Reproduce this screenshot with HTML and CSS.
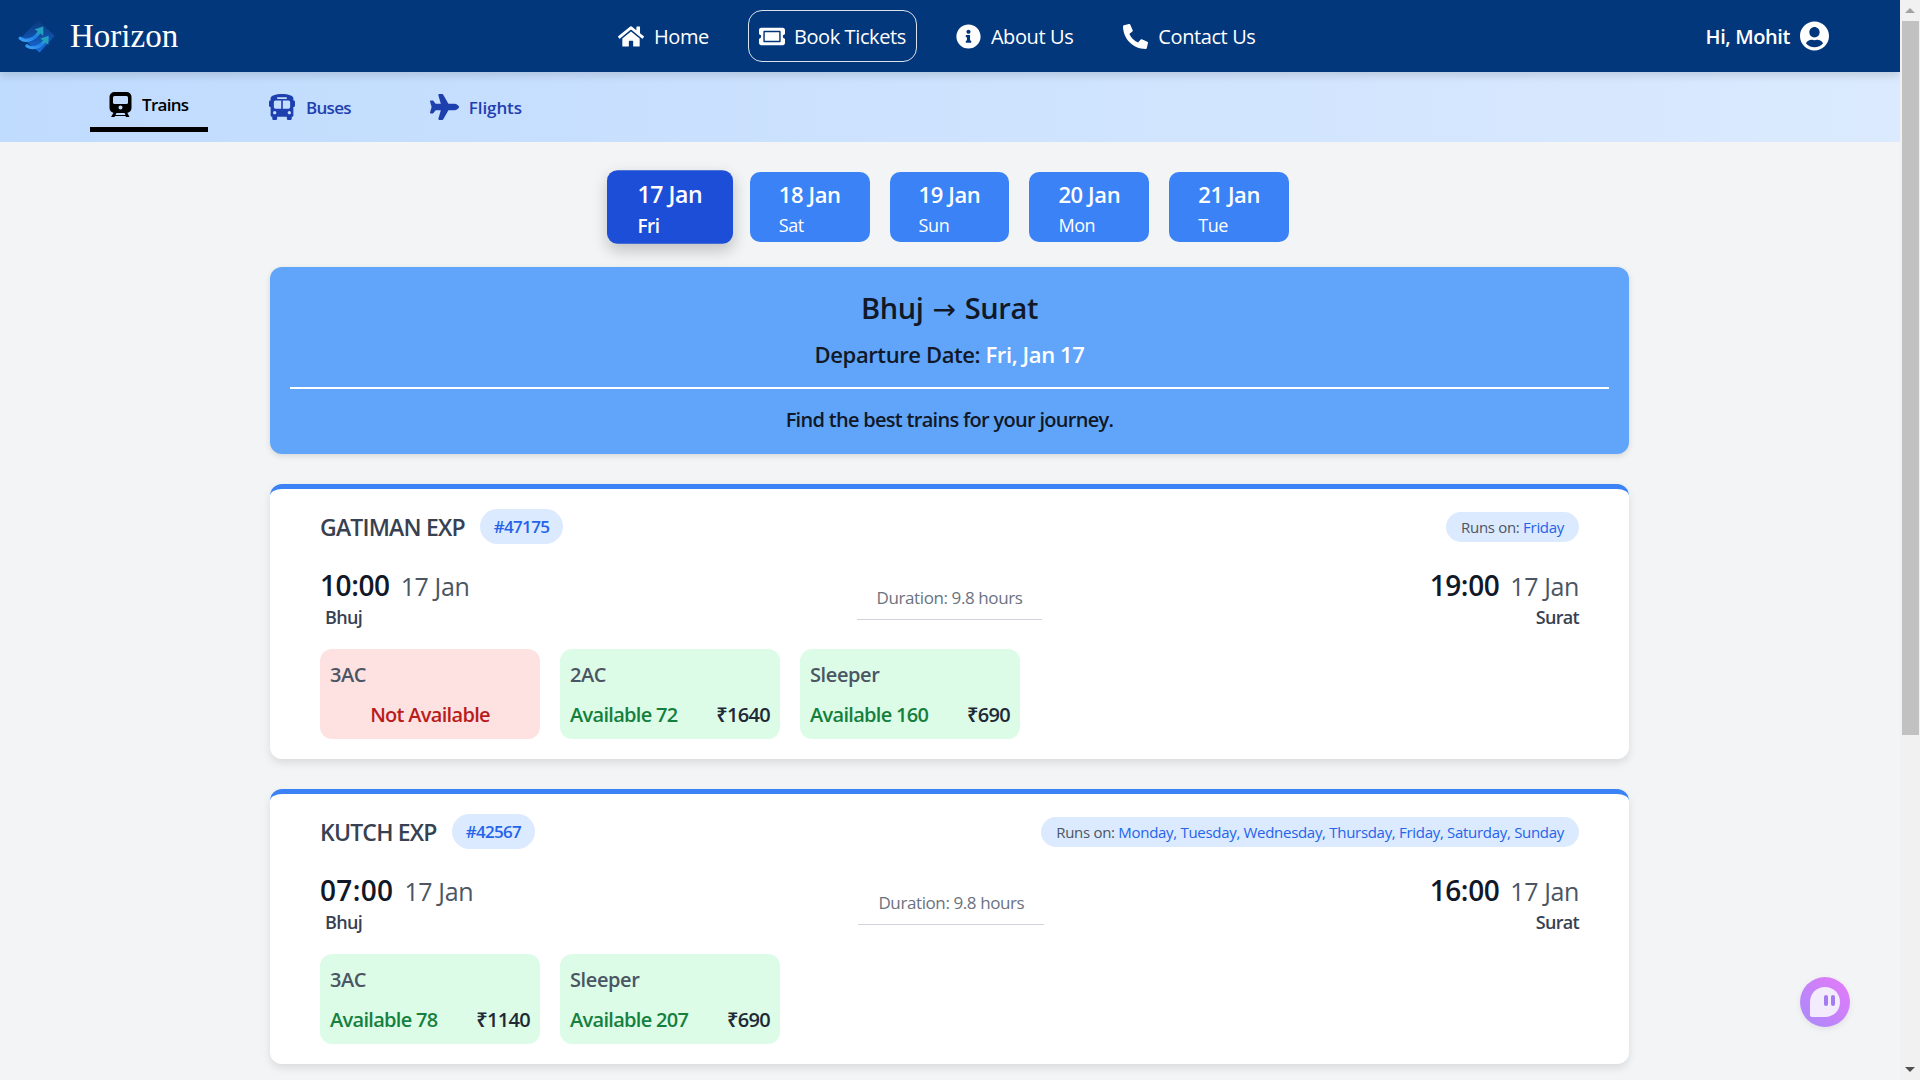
FILE: index.html
```html
<!DOCTYPE html>
<html lang="en">
  <head>
    <meta charset="UTF-8" />
    <meta name="viewport" content="width=device-width, initial-scale=1.0" />
    <title>Horizon || Trains</title>
    <link rel="stylesheet" href="styles.css">
  </head>
  <body>
    <div class="page">
      <nav class="topbar">
        <a class="brand">
          <svg class="brand-logo" viewBox="0 0 120 110">
            <defs>
              <linearGradient id="logoBg" x1="0.5" y1="0" x2="0.5" y2="1">
                <stop offset="0" stop-color="#0a3a7a" />
                <stop offset="0.5" stop-color="#0f4fa8" />
                <stop offset="1" stop-color="#1a6fe0" />
              </linearGradient>
              <linearGradient id="logoSwoosh" x1="0" y1="1" x2="1" y2="0">
                <stop offset="0" stop-color="#3aa0f5" />
                <stop offset="0.6" stop-color="#1e7fe6" />
                <stop offset="1" stop-color="#1fa3c4" />
              </linearGradient>
            </defs>
            <path d="M60 3 L110 50 L65 100 L10 55 Z" fill="url(#logoBg)" />
            <path d="M7 57 C25 72 52 58 64 38" fill="none" stroke="url(#logoSwoosh)" stroke-width="10" stroke-linecap="round" />
            <path d="M50 30 L76 22 L76 50 Z" fill="#22a0bd" />
            <path d="M27 80 C45 92 68 82 80 66" fill="none" stroke="url(#logoSwoosh)" stroke-width="10" stroke-linecap="round" />
            <path d="M67 58 L92 50 L91 77 Z" fill="#22a0bd" />
          </svg>
          <span class="brand-name">Horizon</span>
        </a>
        <div class="nav-links">
          <a class="nav-link">
            <svg class="nav-icon home-icon" viewBox="0 0 576 512"><path d="M280.37 148.26L96 300.11V464a16 16 0 0 0 16 16l112.06-.29a16 16 0 0 0 15.92-16V368a16 16 0 0 1 16-16h64a16 16 0 0 1 16 16v95.64a16 16 0 0 0 16 16.05L464 480a16 16 0 0 0 16-16V300L295.67 148.26a12.19 12.19 0 0 0-15.3 0zM571.6 251.47L488 182.56V44.05a12 12 0 0 0-12-12h-56a12 12 0 0 0-12 12v72.61L318.47 43a48 48 0 0 0-61 0L4.34 251.47a12 12 0 0 0-1.6 16.9l25.5 31A12 12 0 0 0 45.15 301l235.22-193.74a12.19 12.19 0 0 1 15.3 0L530.9 301a12 12 0 0 0 16.9-1.6l25.5-31a12 12 0 0 0-1.7-16.93z"/></svg>
            Home
          </a>
          <a class="nav-link nav-link-active">
            <svg class="nav-icon home-icon" viewBox="0 0 576 512"><path d="M128 160h320v192H128V160zm400 96c0 26.51 21.49 48 48 48v96c0 26.51-21.49 48-48 48H48c-26.51 0-48-21.49-48-48v-96c26.51 0 48-21.49 48-48s-21.49-48-48-48v-96c0-26.51 21.49-48 48-48h480c26.51 0 48 21.49 48 48v96c-26.51 0-48 21.49-48 48zm-48-104c0-13.255-10.745-24-24-24H120c-13.255 0-24 10.745-24 24v208c0 13.255 10.745 24 24 24h336c13.255 0 24-10.745 24-24V152z"/></svg>
            Book Tickets
          </a>
          <a class="nav-link">
            <svg class="nav-icon" viewBox="0 0 512 512"><path d="M256 8C119.043 8 8 119.083 8 256c0 136.997 111.043 248 248 248s248-111.003 248-248C504 119.083 392.957 8 256 8zm0 110c23.196 0 42 18.804 42 42s-18.804 42-42 42-42-18.804-42-42 18.804-42 42-42zm56 254c0 6.627-5.373 12-12 12h-88c-6.627 0-12-5.373-12-12v-24c0-6.627 5.373-12 12-12h12v-64h-12c-6.627 0-12-5.373-12-12v-24c0-6.627 5.373-12 12-12h64c6.627 0 12 5.373 12 12v100h12c6.627 0 12 5.373 12 12v24z"/></svg>
            About Us
          </a>
          <a class="nav-link">
            <svg class="nav-icon" viewBox="0 0 512 512"><path d="M497.39 361.8l-112-48a24 24 0 0 0-28 6.9l-49.6 60.6A370.66 370.66 0 0 1 130.6 204.11l60.6-49.6a23.94 23.94 0 0 0 6.9-28l-48-112A24.16 24.16 0 0 0 122.6.61l-104 24A24 24 0 0 0 0 48c0 256.5 207.9 464 464 464a24 24 0 0 0 23.4-18.6l24-104a24.29 24.29 0 0 0-14.01-27.6z"/></svg>
            Contact Us
          </a>
        </div>
        <div class="user">
          <span>Hi, Mohit</span>
          <svg class="user-icon" viewBox="0 0 496 512"><path d="M248 8C111 8 0 119 0 256s111 248 248 248 248-111 248-248S385 8 248 8zm0 96c48.6 0 88 39.4 88 88s-39.4 88-88 88-88-39.4-88-88 39.4-88 88-88zm0 344c-58.7 0-111.3-26.6-146.5-68.2 18.8-35.4 55.6-59.8 98.5-59.8 2.4 0 4.8.4 7.1 1.1 13 4.2 26.6 6.9 40.9 6.9 14.3 0 28-2.7 40.9-6.9 2.3-.7 4.7-1.1 7.1-1.1 42.9 0 79.7 24.4 98.5 59.8C359.3 421.4 306.7 448 248 448z"/></svg>
        </div>
      </nav>

      <div class="tabs">
        <a class="tab tab-active">
          <svg class="tab-icon train-icon" viewBox="0 0 22 25">
            <path fill-rule="evenodd" d="M5 0h12a5 5 0 0 1 5 5v11a5 5 0 0 1-5 5H5a5 5 0 0 1-5-5V5a5 5 0 0 1 5-5zM5 4a1.5 1.5 0 0 0-1.5 1.5v5A1.5 1.5 0 0 0 5 12h12a1.5 1.5 0 0 0 1.5-1.5v-5A1.5 1.5 0 0 0 17 4zM11 13.5a2 2 0 1 0 0 4 2 2 0 0 0 0-4z"/>
            <path d="M4.5 20h3L6 23h10l-1.5-3h3l2.5 5h-3.5l-.5-1H5.500l-.5 1H1.500z"/>
          </svg>
          Trains
        </a>
        <a class="tab">
          <svg class="tab-icon" viewBox="0 0 512 512"><path d="M488 128h-8V80c0-44.8-99.2-80-224-80S32 35.2 32 80v48h-8c-13.25 0-24 10.74-24 24v80c0 13.25 10.75 24 24 24h8v160c0 17.67 14.33 32 32 32v32c0 17.67 14.33 32 32 32h32c17.67 0 32-14.33 32-32v-32h192v32c0 17.67 14.33 32 32 32h32c17.67 0 32-14.33 32-32v-32h6.4c16 0 25.6-12.8 25.6-25.6V256h8c13.25 0 24-10.75 24-24v-80c0-13.25-10.75-24-24-24zM160 72c0-4.42 3.58-8 8-8h176c4.42 0 8 3.58 8 8v16c0 4.42-3.58 8-8 8H168c-4.42 0-8-3.58-8-8V72zm-48 328c-17.67 0-32-14.33-32-32s14.33-32 32-32 32 14.33 32 32-14.33 32-32 32zm128-112H128c-17.67 0-32-14.33-32-32v-96c0-17.67 14.33-32 32-32h112v160zm32 0V128h112c17.67 0 32 14.33 32 32v96c0 17.67-14.33 32-32 32H272zm128 112c-17.67 0-32-14.33-32-32s14.33-32 32-32 32 14.33 32 32-14.33 32-32 32z"/></svg>
          Buses
        </a>
        <a class="tab tab-flights">
          <svg class="tab-icon" viewBox="0 0 576 512"><path d="M480 192H365.71L260.61 8.06A16.014 16.014 0 0 0 246.71 0h-65.5c-10.63 0-18.3 10.17-15.38 20.39L214.86 192H112l-43.2-57.6c-3.02-4.03-7.77-6.4-12.8-6.4H16.01C5.6 128-2.04 137.78.49 147.88L32 256 .49 364.12C-2.04 374.22 5.6 384 16.01 384H56c5.04 0 9.78-2.37 12.8-6.4L112 320h102.86l-49.03 171.6c-2.92 10.22 4.75 20.4 15.38 20.4h65.5c5.74 0 11.04-3.08 13.89-8.06L365.71 320H480c35.35 0 96-28.65 96-64s-60.65-64-96-64z"/></svg>
          Flights
        </a>
      </div>

      <main class="content">
        <div class="dates">
          <button class="date date-active"><span class="date-day">17 Jan</span><span class="date-week">Fri</span></button>
          <button class="date"><span class="date-day">18 Jan</span><span class="date-week">Sat</span></button>
          <button class="date"><span class="date-day">19 Jan</span><span class="date-week">Sun</span></button>
          <button class="date"><span class="date-day">20 Jan</span><span class="date-week">Mon</span></button>
          <button class="date"><span class="date-day">21 Jan</span><span class="date-week">Tue</span></button>
        </div>

        <section class="banner">
          <h1 class="banner-title">Bhuj <span class="banner-arrow">→</span> Surat</h1>
          <p class="banner-date">Departure Date: <span class="banner-date-value">Fri, Jan 17</span></p>
          <hr class="banner-line">
          <p class="banner-note">Find the best trains for your journey.</p>
        </section>

        <article class="train">
          <div class="train-head">
            <div class="train-name">
              <h2>GATIMAN EXP</h2>
              <span class="train-number">#47175</span>
            </div>
            <div class="train-runs">Runs on: <span class="train-days">Friday</span></div>
          </div>
          <div class="train-times">
            <div>
              <div><span class="time">10:00</span><span class="time-date">17 Jan</span></div>
              <div class="station">Bhuj</div>
            </div>
            <div class="duration">Duration: 9.8 hours</div>
            <div class="train-arrive">
              <div><span class="time">19:00</span><span class="time-date">17 Jan</span></div>
              <div class="station station-end">Surat</div>
            </div>
          </div>
          <div class="classes">
            <div class="class-box class-none">
              <div class="class-name">3AC</div>
              <div class="class-closed">Not Available</div>
            </div>
            <div class="class-box">
              <div class="class-name">2AC</div>
              <div class="class-row"><span class="class-seats">Available 72</span><span class="class-price">₹1640</span></div>
            </div>
            <div class="class-box">
              <div class="class-name">Sleeper</div>
              <div class="class-row"><span class="class-seats">Available 160</span><span class="class-price">₹690</span></div>
            </div>
          </div>
        </article>

        <article class="train">
          <div class="train-head">
            <div class="train-name">
              <h2>KUTCH EXP</h2>
              <span class="train-number">#42567</span>
            </div>
            <div class="train-runs">Runs on: <span class="train-days">Monday, Tuesday, Wednesday, Thursday, Friday, Saturday, Sunday</span></div>
          </div>
          <div class="train-times">
            <div>
              <div><span class="time time-wide">07:00</span><span class="time-date">17 Jan</span></div>
              <div class="station">Bhuj</div>
            </div>
            <div class="duration">Duration: 9.8 hours</div>
            <div class="train-arrive">
              <div><span class="time">16:00</span><span class="time-date">17 Jan</span></div>
              <div class="station station-end">Surat</div>
            </div>
          </div>
          <div class="classes">
            <div class="class-box">
              <div class="class-name">3AC</div>
              <div class="class-row"><span class="class-seats">Available 78</span><span class="class-price">₹1140</span></div>
            </div>
            <div class="class-box">
              <div class="class-name">Sleeper</div>
              <div class="class-row"><span class="class-seats">Available 207</span><span class="class-price">₹690</span></div>
            </div>
          </div>
        </article>
      </main>

      <button class="chat-button">
        <svg class="chat-icon" viewBox="0 0 32 32">
          <path d="M16 1 C24.500 1 31 7.500 31 16 C31 24.500 24.500 31 16 31 L3 31 C1.900 31 1 30.100 1 29 L1 16 C1 7.500 7.500 1 16 1 Z" fill="#f3ecfd" />
          <rect x="15" y="9" width="4" height="11" rx="2" fill="#a57bf0" />
          <rect x="22" y="9" width="4" height="11" rx="2" fill="#a57bf0" />
        </svg>
      </button>
    </div>

    <div class="scrollbar">
      <span class="scroll-up"></span>
      <span class="scroll-thumb"></span>
      <span class="scroll-down"></span>
    </div>
  </body>
</html>
```

FILE: styles.css
```css
* {
  box-sizing: border-box;
}

html,
body {
  height: 100%;
  margin: 0;
  overflow: hidden;
}

body {
  display: flex;
  background-color: #f3f4f6;
  font-family: "Open Sans", "Noto Sans", sans-serif;
  letter-spacing: -0.4px;
  color: #111827;
}

h1,
h2,
p {
  margin: 0;
}

.page {
  position: relative;
  flex: 1;
  min-width: 0;
  height: 100%;
  overflow: hidden;
}


/* top bar */

.topbar {
  position: relative;
  z-index: 2;
  display: flex;
  align-items: center;
  height: 72px;
  padding: 0 71px 0 18px;
  background-color: #03377b;
  color: #ffffff;
  box-shadow: 0 4px 8px rgba(0, 0, 0, 0.12);
}

.brand {
  display: flex;
  align-items: center;
  gap: 12px;
  width: 589px;
}

.brand-logo {
  width: 40px;
  height: 37px;
  margin-top: 3px;
}

.brand-name {
  font-family: "Liberation Serif", serif;
  font-size: 33px;
  letter-spacing: 0;
}

.nav-links {
  display: flex;
  align-items: center;
  gap: 28px;
}

.nav-link {
  display: flex;
  align-items: center;
  gap: 10px;
  height: 52px;
  padding: 0 10px;
  border: 1px solid transparent;
  border-radius: 14px;
  font-size: 20px;
}

.nav-link-active {
  gap: 9px;
  border-color: rgba(255, 255, 255, 0.85);
}

.nav-icon {
  width: 25px;
  height: 25px;
  fill: #ffffff;
}

.home-icon {
  width: 26px;
}

.user {
  display: flex;
  align-items: center;
  gap: 10px;
  margin-left: auto;
  font-size: 20px;
  font-weight: 600;
}

.user-icon {
  width: 29px;
  height: 30px;
  fill: #ffffff;
}


/* transport tabs */

.tabs {
  display: flex;
  align-items: center;
  gap: 61px;
  height: 70px;
  padding-left: 90px;
  background: linear-gradient(90deg, #bfdbfe, #dbeafe);
}

.tab {
  display: flex;
  align-items: center;
  gap: 11px;
  color: #1e40af;
  font-size: 17px;
  font-weight: 600;
  letter-spacing: -0.7px;
}

.tab-icon {
  width: 26px;
  height: 26px;
  fill: #1e40af;
}

.tab-flights {
  gap: 10px;
  margin-left: 18px;
  letter-spacing: -0.1px;
}

.tab-flights .tab-icon {
  width: 29px;
}

.tab-active {
  gap: 10px;
  width: 118px;
  height: 60px;
  margin-bottom: 10px;
  padding: 10px 0 0 19px;
  border-bottom: 5px solid #000000;
  color: #000000;
}

.tab-active .tab-icon {
  fill: #000000;
}

.train-icon {
  width: 23px;
  height: 25px;
}


/* date picker */

.content {
  width: 1359px;
  margin-left: 270px;
}

.dates {
  display: flex;
  justify-content: center;
  gap: 20px;
  padding-top: 30px;
}

.date {
  display: flex;
  flex-direction: column;
  height: 70px;
  padding: 7px 29px;
  border: none;
  border-radius: 10px;
  background-color: #3b82f6;
  color: #ffffff;
  font-family: inherit;
  letter-spacing: inherit;
  text-align: left;
}

.date-active {
  background-color: #1d4ed8;
  transform: scale(1.05);
  box-shadow: 0 6px 14px rgba(0, 0, 0, 0.2);
  font-weight: 600;
}

.date-day {
  font-size: 22px;
  font-weight: 600;
  line-height: 30px;
}

.date-week {
  margin-top: 4px;
  font-size: 18px;
  line-height: 24px;
}


/* route banner */

.banner {
  height: 187px;
  margin-top: 25px;
  padding: 20px;
  border-radius: 12px;
  background-color: #60a5fa;
  box-shadow: 0 2px 6px rgba(0, 0, 0, 0.12);
  text-align: center;
}

.banner-title {
  font-size: 29px;
  font-weight: 600;
  word-spacing: 2px;
  line-height: 42px;
}

.banner-arrow {
  font-family: "DejaVu Sans", sans-serif;
  font-size: 28px;
  font-weight: 400;
}

.banner-date {
  margin-top: 3px;
  font-size: 22px;
  font-weight: 600;
  line-height: 40px;
}

.banner-date-value {
  color: #ffffff;
}

.banner-line {
  height: 2px;
  margin: 13px 0 0;
  border: none;
  background-color: #ffffff;
}

.banner-note {
  margin-top: 18px;
  font-size: 20px;
  font-weight: 600;
  letter-spacing: -0.7px;
  line-height: 26px;
}


/* train cards */

.train {
  height: 275px;
  margin-top: 30px;
  padding: 20px 50px;
  border-top: 5px solid #3b82f6;
  border-radius: 12px;
  background-color: #ffffff;
  box-shadow: 0 4px 8px rgba(0, 0, 0, 0.1);
}

.train-head {
  display: flex;
  justify-content: space-between;
  align-items: center;
  height: 35px;
}

.train-name {
  display: flex;
  align-items: center;
  gap: 15px;
}

.train-name h2 {
  font-size: 23px;
  font-weight: 600;
  letter-spacing: -0.8px;
  color: #374151;
}

.train-number {
  padding: 0 14px;
  border-radius: 18px;
  background-color: #dbeafe;
  color: #2563eb;
  font-size: 17px;
  font-weight: 600;
  letter-spacing: -0.7px;
  line-height: 35px;
}

.train-runs {
  padding: 0 15px;
  border-radius: 15px;
  background-color: #dbeafe;
  color: #4b5563;
  font-size: 15px;
  letter-spacing: -0.3px;
  line-height: 30px;
}

.train-days {
  color: #2563eb;
}

.train-times {
  display: flex;
  justify-content: space-between;
  margin-top: 22px;
}

.time {
  font-size: 28px;
  font-weight: 600;
  line-height: 38px;
  color: #111827;
}

.time-wide {
  letter-spacing: 0.35px;
}

.time-date {
  margin-left: 11px;
  font-size: 25px;
  color: #4b5563;
}

.station {
  padding-left: 5px;
  font-size: 18px;
  font-weight: 600;
  letter-spacing: -0.7px;
  line-height: 26px;
  color: #374151;
}

.station-end {
  padding: 0;
}

.train-arrive {
  text-align: right;
}

.duration {
  height: 37px;
  margin-top: 17px;
  padding: 0 20px;
  border-bottom: 1px solid #d1d5db;
  color: #6b7280;
  font-size: 17px;
  line-height: 30px;
}

.classes {
  display: flex;
  gap: 20px;
  margin-top: 19px;
}

.class-box {
  width: 220px;
  height: 90px;
  padding: 12px 10px;
  border-radius: 12px;
  background-color: #dcfce7;
  font-size: 20px;
}

.class-none {
  background-color: #fee2e2;
}

.class-name {
  font-weight: 600;
  line-height: 28px;
  color: #4b5563;
}

.class-row {
  display: flex;
  justify-content: space-between;
  margin-top: 12px;
  line-height: 28px;
  font-weight: 600;
  letter-spacing: -0.7px;
}

.class-seats {
  color: #15803d;
}

.class-price {
  color: #1f2937;
}

.class-closed {
  margin-top: 12px;
  line-height: 28px;
  color: #b91c1c;
  font-weight: 600;
  letter-spacing: -0.7px;
  text-align: center;
}


/* floating chat */

.chat-button {
  position: absolute;
  right: 50px;
  bottom: 53px;
  display: flex;
  justify-content: center;
  align-items: center;
  width: 50px;
  height: 50px;
  padding: 0;
  border: none;
  border-radius: 50%;
  background: linear-gradient(45deg, #a78bfa, #e879f9);
  box-shadow: 0 2px 6px rgba(0, 0, 0, 0.08);
}

.chat-icon {
  width: 32px;
  height: 32px;
}


/* window scrollbar */

.scrollbar {
  display: flex;
  flex-direction: column;
  align-items: center;
  width: 20px;
  height: 100%;
  padding: 8px 0;
  background-color: #f1f1f1;
}

.scroll-up,
.scroll-down {
  width: 0;
  height: 0;
  border-right: 5px solid transparent;
  border-left: 5px solid transparent;
}

.scroll-up {
  border-bottom: 5px solid #a3a3a3;
}

.scroll-down {
  margin-top: auto;
  border-top: 5px solid #505050;
}

.scroll-thumb {
  width: 17px;
  height: 714px;
  margin-top: 8px;
  background-color: #c1c1c1;
}
```
